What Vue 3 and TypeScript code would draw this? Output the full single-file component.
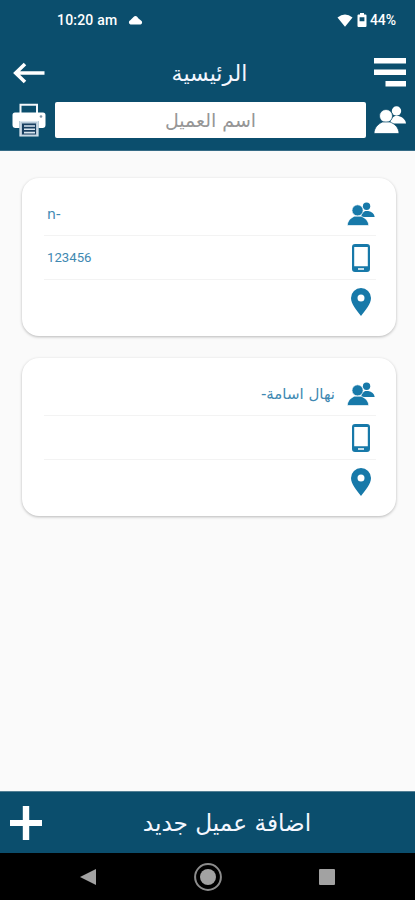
<script setup lang="ts">
interface Customer {
  id: number
  name: string
  phone: string
  address: string
  rtl: boolean
}

const customers: Customer[] = [
  { id: 1, name: 'n-', phone: '123456', address: '', rtl: false },
  { id: 2, name: 'نهال اسامة-', phone: '', address: '', rtl: true },
]
</script>

<template>
  <div class="screen">
    <header class="header">
      <div class="status">
        <span class="clock">10:20 am</span>
        <svg class="cloud" viewBox="0 0 15 10"><path d="M2.500 9.500a2.300 2.300 0 0 1-.2-4.300L5.500 2Q8-.5 10.500 3.500L13 5.500a2.200 2.200 0 0 1-.5 4z" fill="#fff" /></svg>
        <svg class="wifi" viewBox="0 0 16 13"><path d="M.5 3.600Q8-2.600 15.500 3.600L8 12.800z" fill="#fff" /></svg>
        <svg class="battery" viewBox="0 0 10 14"><path fill-rule="evenodd" d="M3 0h4v1.500h1.500a1 1 0 0 1 1 1V13a1 1 0 0 1-1 1h-7a1 1 0 0 1-1-1V2.500a1 1 0 0 1 1-1H3zM2.600 4.300v4h4.800v-4z" fill="#fff" /></svg>
        <span class="percent">44%</span>
      </div>
      <div class="toolbar">
        <svg class="back" viewBox="0 0 32 22"><path d="M12 2 2.700 11l9.300 9M3 11H31.500" fill="none" stroke="#fff" stroke-width="3.600" /></svg>
        <h1 class="title" dir="rtl"><span>الرئيسية</span></h1>
        <svg class="menu" viewBox="0 0 32 29"><path d="M0 0h32v5.500H0zM0 11.500h32V17H0zM11.500 23H32v5.500H11.500z" fill="#fff" /></svg>
      </div>
      <div class="search">
        <svg class="printer" viewBox="0 0 34 34">
          <path d="M8.500 11V1.800h16.500V11" fill="none" stroke="#f4f8fc" stroke-width="2" />
          <path d="M3 9.500h28a2.500 2.500 0 0 1 2.500 2.500V22a3 3 0 0 1-3 3h-4v-7H7.500v7h-4a3 3 0 0 1-3-3v-10a2.500 2.500 0 0 1 2.500-2.500z" fill="#fff" />
          <circle cx="29" cy="13.500" r="1.300" fill="#7d94a8" />
          <path d="M8 18.500h18v14.500H8z" fill="#b7c9d8" stroke="#dce7ef" stroke-width="1.200" />
          <path d="M10 20.500h14v11H10z" fill="#193f60" />
          <path d="M12 23h11M12 26.300h11M12 29.600h11" stroke="#d8e5ef" stroke-width="1.600" />
        </svg>
        <div class="field" dir="rtl"><span>اسم العميل</span></div>
        <svg class="people" viewBox="0 0 32 28">
          <circle cx="22.500" cy="5" r="4.700" /><path d="M16 17.500C17 13 18.500 11 21 10h3.500c4 1 7 3.500 7.500 7.500z" />
          <circle class="cut" cx="12" cy="10" r="6.500" /><path class="cut" d="M0 27.500C.3 21.500 4 18 8.500 16h7.500c5 2 8.700 5.500 9 11.500z" />
        </svg>
      </div>
    </header>

    <main class="list">
      <article v-for="customer in customers" :key="customer.id" class="card">
        <div class="row">
          <span class="value" :class="customer.rtl ? 'arabic' : 'latin'" :dir="customer.rtl ? 'rtl' : 'ltr'">{{ customer.name }}</span>
          <svg class="mini-people" viewBox="0 0 32 28">
            <circle cx="22.500" cy="5" r="4.300" /><path d="M16 17.500C17 13 18.500 11.500 21 10.500h3.500c4 1 7 3.200 7.500 7z" />
            <circle class="cut" cx="12" cy="9.800" r="6.500" /><path class="cut" d="M0 27.500C.3 21.500 4 18.500 8.500 16.500h7.500c5 2 8.700 5 9 11z" />
          </svg>
        </div>
        <div class="row">
          <span class="value digits">{{ customer.phone }}</span>
          <svg class="phone" viewBox="0 0 18 28"><path fill-rule="evenodd" d="M3 0h12a3 3 0 0 1 3 3v22a3 3 0 0 1-3 3H3a3 3 0 0 1-3-3V3a3 3 0 0 1 3-3zM2.200 3v19.300h13.600V3zM6 24.300v1.400h6v-1.400z" fill="#1779a9" /></svg>
        </div>
        <div class="row">
          <span class="value">{{ customer.address }}</span>
          <svg class="pin" viewBox="0 0 20 28"><path fill-rule="evenodd" d="M10 0a10 10 0 0 1 10 10c0 6-5.500 12-10 18C5.500 22 0 16 0 10A10 10 0 0 1 10 0zm0 6.500a3.500 3.500 0 1 0 0 7 3.500 3.500 0 0 0 0-7z" fill="#1779a9" /></svg>
        </div>
      </article>
    </main>

    <button class="add" type="button">
      <svg class="plus" viewBox="0 0 32 34"><path d="M12.800 0h6.400v14H32v6H19.200v14h-6.400V20H0v-6h12.800z" fill="#fff" /></svg>
      <span class="add-label" dir="rtl">اضافة عميل جديد</span>
    </button>
    <nav class="nav">
      <svg viewBox="0 0 28 28"><path d="M6 14 22 6v16z" fill="#a2a2a2" /></svg>
      <svg viewBox="0 0 28 28"><circle cx="14" cy="14" r="12.900" fill="none" stroke="#8c8c8c" stroke-width="2" /><circle cx="14" cy="14" r="8" fill="#a2a2a2" /></svg>
      <svg viewBox="0 0 28 28"><rect x="6" y="6" width="16" height="16" rx="1" fill="#a2a2a2" /></svg>
    </nav>
  </div>
</template>

<style>
body { background: #fafafa; }
</style>

<style scoped>
.screen { width: 415px; height: 900px; display: flex; flex-direction: column; overflow: hidden; background: #fafafa; font-family: "DejaVu Sans", sans-serif; }
.screen * { box-sizing: border-box; }
svg { display: block; flex: none; }
.header { height: 151px; flex: none; background: #0b4e6d; border-bottom: 1px solid #356b86; }
.status { height: 40px; padding: 0 18px 0 57px; display: flex; align-items: center; color: #fff; font: 500 14px Roboto, sans-serif; }
.clock { width: 61px; white-space: nowrap; letter-spacing: .2px; }
.cloud { width: 15px; height: 10px; margin-left: 10px; }
.wifi { width: 16px; height: 13px; margin-left: auto; }
.battery { width: 10px; height: 14px; margin-left: 4px; }
.percent { width: 27px; margin-left: 3px; font-size: 14px; letter-spacing: -.1px; white-space: nowrap; }
.toolbar { height: 62px; padding: 0 9px 0 13px; display: flex; align-items: center; justify-content: space-between; }
.back { width: 32px; height: 22px; margin-top: 3px; }
.title { margin: 5px 0 0; width: 76px; display: flex; justify-content: center; color: #f4f7ff; font-size: 22px; line-height: 30px; font-weight: 400; white-space: nowrap; }
.menu { width: 32px; height: 29px; margin-top: 2px; }
.search { height: 36px; padding: 0 9px 0 12px; display: flex; align-items: center; }
.printer { width: 34px; height: 34px; }
.field { width: 311px; height: 36px; margin-left: 9px; border-radius: 2px; background: #fff; color: #969696; font-size: 19px; display: flex; align-items: center; justify-content: center; white-space: nowrap; }
.people { width: 32px; height: 28px; margin-left: 8px; fill: #fff; overflow: visible; }
.people .cut { stroke: #0b4e6d; stroke-width: .7; }
.list { flex: 1; padding: 27px 19px 0 22px; display: flex; flex-direction: column; gap: 22px; }
.card { height: 158px; padding: 14px 20px 0 22px; border-radius: 17px; background: #fff; box-shadow: 0 1px 3px #0004; }
.row { height: 44px; display: flex; align-items: center; border-bottom: 1px solid #f3f3f3; }
.row:last-child { border: 0; }
.value { flex: 1; padding-left: 3px; color: #3f89b2; font-size: 13px; white-space: nowrap; }
.value.latin { font-size: 14px; }
.value.arabic { padding: 0 12px 0 0; font-size: 15px; }
.value.digits { font-family: Roboto, sans-serif; font-size: 13.200px; }
.mini-people { width: 28px; height: 24px; margin-right: 1px; fill: #1779a9; overflow: visible; }
.mini-people .cut { stroke: #fff; stroke-width: .8; }
.phone { width: 18px; height: 28px; margin-right: 6px; }
.pin { width: 20px; height: 28px; margin-right: 5px; }
.add { height: 62px; flex: none; padding: 0 10px; border: 0; border-top: 1px solid #547f94; background: #0b4e6d; display: flex; align-items: center; color: #f4f7ff; font: 23.200px "DejaVu Sans", sans-serif; }
.plus { width: 32px; height: 34px; }
.add-label { width: 168px; margin-left: 101px; display: flex; justify-content: center; white-space: nowrap; }
.nav { height: 47px; flex: none; padding: 0 74px; background: #000; display: flex; align-items: center; justify-content: space-between; }
.nav svg { width: 28px; height: 28px; }
</style>
